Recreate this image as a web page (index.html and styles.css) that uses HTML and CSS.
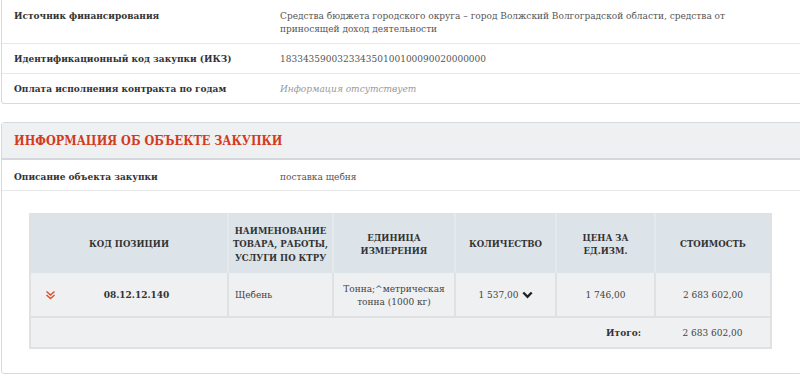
FILE: index.html
```html
<!DOCTYPE html>
<html lang="ru">
<head>
<meta charset="utf-8">
<link rel="stylesheet" href="styles.css">
</head>
<body>
<div class="page">
  <section class="card card--cut">
    <div class="row">
      <div class="label">Источник финансирования</div>
      <div class="value">Средства бюджета городского округа – город Волжский Волгоградской области, средства от приносящей доход деятельности</div>
    </div>
    <div class="row">
      <div class="label">Идентификационный код закупки (ИКЗ)</div>
      <div class="value">183343590032334350100100090020000000</div>
    </div>
    <div class="row row--last">
      <div class="label">Оплата исполнения контракта по годам</div>
      <div class="value value--empty">Информация отсутствует</div>
    </div>
  </section>

  <section class="card">
    <h2 class="card-title">ИНФОРМАЦИЯ ОБ ОБЪЕКТЕ ЗАКУПКИ</h2>
    <div class="row row--desc">
      <div class="label">Описание объекта закупки</div>
      <div class="value">поставка щебня</div>
    </div>
    <div class="table-wrap">
      <table class="items">
        <colgroup>
          <col class="c1"><col class="c2"><col class="c3"><col class="c4"><col class="c5"><col class="c6">
        </colgroup>
        <thead>
          <tr>
            <th>КОД ПОЗИЦИИ</th>
            <th class="th-tight">НАИМЕНОВАНИЕ ТОВАРА, РАБОТЫ, УСЛУГИ ПО КТРУ</th>
            <th>ЕДИНИЦА ИЗМЕРЕНИЯ</th>
            <th>КОЛИЧЕСТВО</th>
            <th>ЦЕНА ЗА ЕД.ИЗМ.</th>
            <th>СТОИМОСТЬ</th>
          </tr>
        </thead>
        <tbody>
          <tr class="item">
            <td class="code-cell">
              <div class="code-wrap">
                <svg class="expand" width="11" height="10" viewBox="0 0 11 10"><path d="M1.5 1.5 L5.5 5 L9.5 1.5 M1.5 5 L5.5 8.5 L9.5 5" fill="none" stroke="#e0532f" stroke-width="1.6"/></svg>
                <span class="code">08.12.12.140</span>
              </div>
            </td>
            <td class="left">Щебень</td>
            <td>Тонна;^метрическая тонна (1000 кг)</td>
            <td><span class="qty">1 537,00<svg class="caret" width="11" height="8" viewBox="0 0 11 8"><path d="M1.3 1.5 L5.5 5.8 L9.7 1.5" fill="none" stroke="#222" stroke-width="2.4"/></svg></span></td>
            <td>1 746,00</td>
            <td>2 683 602,00</td>
          </tr>
          <tr class="total">
            <td colspan="5" class="total-label">Итого:</td>
            <td>2 683 602,00</td>
          </tr>
        </tbody>
      </table>
    </div>
  </section>
</div>
</body>
</html>
```
FILE: styles.css
```css
html, body {
  margin: 0;
  padding: 0;
  background: #ffffff;
  overflow: hidden;
}
body {
  font-family: "DejaVu Serif", "Liberation Serif", serif;
  font-stretch: condensed;
  font-size: 10px;
  color: #333;
}
.page {
  width: 801px;
  padding: 0 0 0 1px;
}
.card {
  border: 1px solid #d7dadd;
  border-radius: 3px;
  background: #fff;
  margin-bottom: 18px;
}
.card--cut {
  border-top-width: 0;
  border-top-left-radius: 0;
  border-top-right-radius: 0;
}
.row {
  display: flex;
  padding: 8px 12px 8px 12px;
  line-height: 13px;
  border-bottom: 1px solid #e6e8ea;
}
.row--last {
  border-bottom: 0;
}
.card--cut .row:first-child {
  padding-top: 9px;
}
.row--desc {
  padding-top: 10px;
  padding-bottom: 7px;
}
.label {
  width: 266px;
  flex: none;
  font-weight: bold;
  color: #333;
}
.value {
  flex: 1;
  color: #555;
  padding-right: 20px;
}
.value--empty {
  font-style: italic;
  color: #999;
}
.card-title {
  margin: 0;
  background: #eef0f2;
  border-bottom: 2px solid #d4d8dc;
  color: #d43a1c;
  font-size: 12.5px;
  font-weight: bold;
  line-height: 18px;
  padding: 9px 12px 8px 12px;
}
.table-wrap {
  padding: 22px 29px 24px 27px;
}
.items {
  width: 100%;
  table-layout: fixed;
  border-collapse: collapse;
  border: 2px solid #dfe1e3;
  font-size: 10px;
}
.c1 { width: 198px; }
.c2 { width: 105px; }
.c3 { width: 122px; }
.c4 { width: 101px; }
.c5 { width: 99px; }
.c6 { width: auto; }
.items th {
  background: #dce3e9;
  color: #333;
  font-size: 9.5px;
  font-weight: bold;
  line-height: 13.5px;
  height: 58px;
  padding: 0 8px;
  text-align: center;
  border-left: 2px solid #e6e9ec;
}
.items th.th-tight {
  padding: 0 1px;
}
.items td {
  background: #eff0f1;
  color: #444;
  line-height: 13px;
  text-align: center;
  padding: 4px 6px;
  border-left: 2px solid #dfe1e3;
}
.items th:first-child, .items td:first-child {
  border-left: 0;
}
.item td {
  height: 35px;
}
.items td.left {
  text-align: left;
}
.code-wrap {
  display: flex;
  align-items: center;
  padding-left: 8px;
}
.expand {
  flex: none;
}
.code {
  flex: 1;
  text-align: center;
  font-weight: bold;
  color: #333;
  padding-right: 4px;
}
.qty {
  display: inline-flex;
  align-items: center;
  gap: 3px;
}
.total td {
  border-top: 2px solid #dfe1e3;
  height: 21px;
  border-left: 0;
}
.items td.total-label {
  text-align: right;
  font-weight: bold;
  color: #333;
  padding-right: 14px;
}
```
